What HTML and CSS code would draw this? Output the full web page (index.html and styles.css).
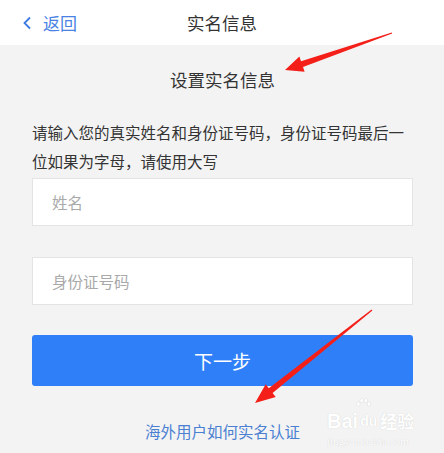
FILE: index.html
```html
<!DOCTYPE html>
<html lang="zh">
<head>
<meta charset="utf-8">
<title>实名信息</title>
<link rel="stylesheet" href="styles.css">
</head>
<body>
<div class="page">
  <header class="topbar">
    <a class="back">
      <svg class="chev" width="10" height="14" viewBox="0 0 10 14"><path d="M8 1.5 L2.5 7 L8 12.5" fill="none" stroke="#3b7be3" stroke-width="1.8"/></svg>
      <span>返回</span>
    </a>
    <div class="title">实名信息</div>
    <div></div>
  </header>
  <main class="content">
    <h1 class="heading">设置实名信息</h1>
    <p class="desc">请输入您的真实姓名和身份证号码，身份证号码最后一位如果为字母，请使用大写</p>
    <div class="field">姓名</div>
    <div class="field second">身份证号码</div>
    <div class="btn">下一步</div>
    <div class="link">海外用户如何实名认证</div>
  </main>
  <div class="watermark">
    <svg class="paw" width="26" height="18" viewBox="0 0 26 18">
      <g fill="#fff" stroke="#dcdcdc" stroke-width="0.8">
        <ellipse cx="6" cy="9" rx="2.6" ry="3.2"/>
        <ellipse cx="11" cy="4" rx="2.6" ry="3.2"/>
        <ellipse cx="17" cy="4" rx="2.6" ry="3.2"/>
        <ellipse cx="22" cy="9" rx="2.6" ry="3.2"/>
      </g>
    </svg>
    <div class="wm-top"><span class="bai">Bai</span><span class="du">du</span><span class="jy">经验</span></div>
    <div class="wm-url">jingyan.baidu.com</div>
  </div>
  <svg class="arrows" width="444" height="453" viewBox="0 0 444 453">
    <polygon fill="#f41f18" points="391.8,32.5 301,61.3 299.4,56.5 285,70 304.6,71.7 303,66.9 392.2,33.5"/>
    <polygon fill="#f41f18" points="371.6,309.5 268.8,388.2 265.7,384.3 255,403 275.7,396.9 272.6,393 372.4,310.5"/>
  </svg>
</div>
</body>
</html>
```

FILE: styles.css
```css
* { box-sizing: border-box; }
html, body { margin: 0; padding: 0; }
body {
  background: #f3f3f3;
  font-family: "Noto Sans CJK SC", "Noto Sans", sans-serif;
  color: #333;
}
.page {
  position: relative;
  width: 444px;
  height: 453px;
  overflow: hidden;
}
.topbar {
  height: 45px;
  background: #fff;
  display: grid;
  grid-template-columns: 1fr auto 1fr;
  align-items: center;
}
.back {
  display: flex;
  align-items: center;
  padding-left: 22px;
  color: #4a82e3;
  font-size: 17px;
}
.back span { margin-left: 11px; }
.title {
  font-size: 17.5px;
  color: #333;
}
.content {
  padding: 0 31px 0 32px;
  display: flex;
  flex-direction: column;
}
.heading {
  margin: 23px 0 0;
  font-size: 17.5px;
  font-weight: normal;
  line-height: 24px;
  text-align: center;
  color: #333;
}
.desc {
  margin: 26px 0 0;
  font-size: 15.5px;
  line-height: 29px;
  color: #333;
}
.field {
  margin-top: 2px;
  height: 48px;
  background: #fff;
  border: 1px solid #e4e4e4;
  display: flex;
  align-items: center;
  padding-left: 19px;
  font-size: 15.5px;
  color: #a9a9a9;
}
.field.second {
  margin-top: 31px;
  height: 48px;
}
.btn {
  margin-top: 30px;
  height: 51px;
  background: #2f80f8;
  border-radius: 3px;
  color: #fff;
  font-size: 19px;
  display: flex;
  align-items: center;
  justify-content: center;
}
.link {
  margin-top: 33px;
  text-align: center;
  font-size: 15.5px;
  line-height: 24px;
  color: #4a7fd2;
}
.arrows {
  position: absolute;
  left: 0;
  top: 0;
  pointer-events: none;
}
.watermark {
  position: absolute;
  left: 327px;
  top: 398px;
  color: #fff;
  text-shadow: 0 0 1px rgba(0,0,0,0.18);
  pointer-events: none;
  display: flex;
  flex-direction: column;
}
.paw {
  margin-left: 23px;
  height: 12px;
}
.wm-top {
  display: flex;
  align-items: flex-end;
  font-family: "Liberation Sans", sans-serif;
  font-weight: bold;
  font-size: 20px;
  line-height: 22px;
}
.du {
  font-size: 14px;
  margin-left: 2px;
}
.jy {
  font-family: "Noto Sans CJK SC", sans-serif;
  font-size: 17px;
  margin-left: 3px;
}
.wm-url {
  font-family: "Liberation Serif", serif;
  font-size: 11px;
  line-height: 14px;
  margin-top: 2px;
}
```
